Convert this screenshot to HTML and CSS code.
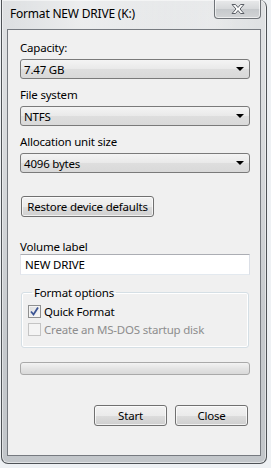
FILE: index.html
```html
<!DOCTYPE html>
<html lang="en">
<head>
    <meta charset="UTF-8">
    <meta name="viewport" content="width=device-width, initial-scale=1.0">
    <title>Format NEW DRIVE (K:)</title>
    <link rel="stylesheet" href="styles.css">
</head>
<body>
    <div class="window">
        <div class="titlebar">
            <span class="title">Format NEW DRIVE (K:)</span>
            <div class="close-x">
                <svg width="16" height="12" viewBox="0 0 16 12">
                    <path d="M2 1.5 L5.5 1.5 L8 4.5 L10.5 1.5 L14 1.5 L10 6 L14 10.5 L10.5 10.5 L8 7.5 L5.5 10.5 L2 10.5 L6 6 Z" fill="#fff" stroke="#5b5f66" stroke-width="1" stroke-linejoin="round"/>
                </svg>
            </div>
        </div>

        <div class="client">
            <label class="field-label">Capacity:</label>
            <div class="combo"><span>7.47 GB</span><i class="arrow"></i></div>

            <label class="field-label">File system</label>
            <div class="combo"><span>NTFS</span><i class="arrow"></i></div>

            <label class="field-label">Allocation unit size</label>
            <div class="combo"><span>4096 bytes</span><i class="arrow"></i></div>

            <div class="btn btn-restore">Restore device defaults</div>

            <label class="field-label label-volume">Volume label</label>
            <div class="textbox">NEW DRIVE</div>

            <fieldset class="options">
                <legend>Format options</legend>
                <div class="check">
                    <span class="box checked">
                        <svg width="11" height="11" viewBox="0 0 11 11">
                            <path d="M2 5.5 L4.5 8.5 L9 1.5" fill="none" stroke="#3c5594" stroke-width="1.8"/>
                        </svg>
                    </span>
                    Quick Format
                </div>
                <div class="check disabled">
                    <span class="box"></span>
                    Create an MS-DOS startup disk
                </div>
            </fieldset>

            <div class="progress"></div>

            <div class="actions">
                <div class="btn btn-action">Start</div>
                <div class="btn btn-action">Close</div>
            </div>
        </div>
    </div>
</body>
</html>
```

FILE: styles.css
```css
body {
    margin: 0;
    background-color: #eef1f4;
    font-family: 'Noto Sans', 'Open Sans', Arial, sans-serif;
    font-size: 11.5px;
    letter-spacing: -0.2px;
    color: #000;
}

.window {
    width: 266px;
    height: 464px;
    margin-left: 1px;
    box-sizing: border-box;
    border: 1px solid #4e5256;
    border-top: none;
    border-radius: 0 7px 7px 7px;
    padding: 0 5px 6px;
    background:
        radial-gradient(ellipse at 30% 8px, rgba(255, 255, 255, 0.6), rgba(255, 255, 255, 0) 60%),
        radial-gradient(ellipse at 80% 20px, rgba(255, 255, 255, 0.5), rgba(255, 255, 255, 0) 50%),
        linear-gradient(#cfd2d5, #c2c6ca);
    box-shadow: inset 0 0 0 1px rgba(255, 255, 255, 0.5);
}

.titlebar {
    height: 29px;
    display: flex;
    align-items: center;
    justify-content: space-between;
}

.title {
    padding-left: 3px;
    padding-bottom: 3px;
    font-size: 12px;
}

.close-x {
    align-self: flex-start;
    width: 47px;
    height: 19px;
    box-sizing: border-box;
    border: 1px solid #6f7378;
    border-top: none;
    border-radius: 0 0 4px 4px;
    background: linear-gradient(#e9eaeb, #d6d8da 50%, #c6c9cc 51%, #d2d4d6);
    box-shadow: inset 0 0 0 1px rgba(255, 255, 255, 0.6);
    display: flex;
    align-items: center;
    justify-content: center;
}

.client {
    height: 427px;
    box-sizing: border-box;
    border: 1px solid #767a80;
    background-color: #f0f0f0;
    padding: 10px 10px 0 12px;
    display: flex;
    flex-direction: column;
}

.field-label {
    display: block;
    line-height: 15px;
    margin-bottom: 4px;
}

.combo {
    height: 20px;
    box-sizing: border-box;
    border: 1px solid #7a7a7a;
    border-radius: 3px;
    background: linear-gradient(#f4f4f4, #e9e9e9 50%, #dedede 51%, #d9d9d9);
    display: flex;
    align-items: center;
    justify-content: space-between;
    padding: 0 5px 0 3px;
    margin-bottom: 8px;
}

.arrow {
    width: 0;
    height: 0;
    border-left: 4px solid transparent;
    border-right: 4px solid transparent;
    border-top: 4px solid #000;
}

.btn {
    height: 21px;
    box-sizing: border-box;
    border: 1px solid #707070;
    border-radius: 3px;
    background: linear-gradient(#f2f2f2, #ebebeb 50%, #dddddd 51%, #cfcfcf);
    box-shadow: inset 0 0 0 1px rgba(255, 255, 255, 0.7);
    display: flex;
    align-items: center;
    justify-content: center;
}

.btn-restore {
    width: 133px;
    margin: 15px 0 0 1px;
}

.label-volume {
    margin-top: 22px;
    margin-bottom: 0;
}

.textbox {
    height: 21px;
    box-sizing: border-box;
    border: 1px solid;
    border-color: #abadb3 #dbdfe6 #e3e9ef #e2e3ea;
    background-color: #fff;
    padding-left: 4px;
    display: flex;
    align-items: center;
}

.options {
    margin: 10px 1px 0 1px;
    padding: 2px 0 9px 6px;
    border: 1px solid #d5dfe5;
    border-radius: 3px;
    box-shadow: inset 0 0 0 1px #fff;
}

.options legend {
    padding: 0 2px;
    margin-left: 4px;
    line-height: 15px;
}

.check {
    display: flex;
    align-items: center;
    gap: 3px;
    height: 18px;
}

.box {
    width: 13px;
    height: 13px;
    box-sizing: border-box;
    border: 1px solid #8e8f8f;
    background: linear-gradient(135deg, #dcdcdc, #fbfbfb);
    box-shadow: inset 0 0 0 1px #f4f4f4;
    display: flex;
    align-items: center;
    justify-content: center;
}

.check.disabled {
    color: #8d8d8d;
}

.check.disabled .box {
    border-color: #c4c4c4;
    background: #f4f4f4;
}

.progress {
    height: 13px;
    margin-top: 14px;
    box-sizing: border-box;
    border: 1px solid #a9a9a9;
    border-radius: 3px;
    background: linear-gradient(#f3f3f3, #e4e4e4 50%, #d9d9d9);
}

.actions {
    display: flex;
    justify-content: flex-end;
    gap: 8px;
    margin-top: 30px;
    padding-right: 2px;
}

.btn-action {
    width: 73px;
}
```
